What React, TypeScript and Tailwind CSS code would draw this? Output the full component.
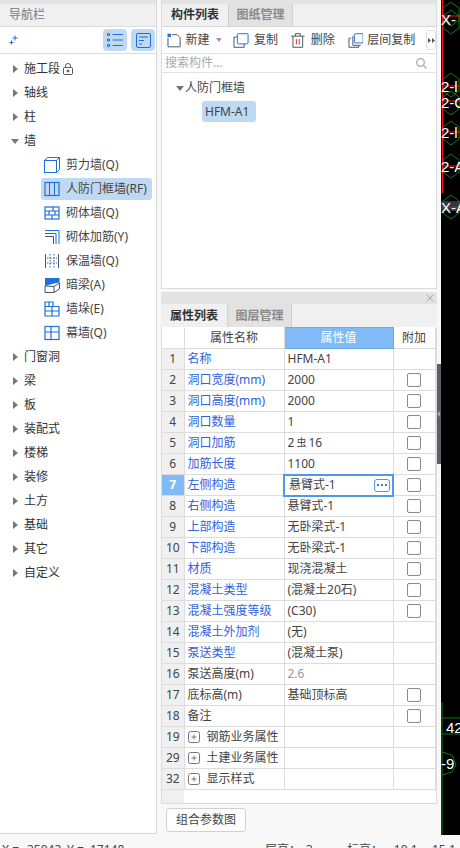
import type { ReactNode } from "react";

const NAV_TOP = ["施工段", "轴线", "柱"];
const NAV_BOTTOM = ["门窗洞", "梁", "板", "装配式", "楼梯", "装修", "土方", "基础", "其它", "自定义"];

const WALL_ITEMS: { label: string; icon: ReactNode; active?: boolean }[] = [
  {
    label: "剪力墙(Q)",
    icon: (
      <svg width="16" height="16" viewBox="0 0 16 16" fill="none" stroke="#1f6fd8">
        <rect x="0.5" y="3.5" width="12" height="12" />
        <path d="M0.5 3.5L3.5 0.5H15.5V12.5L12.5 15.5M12.5 3.5L15.5 .5" />
      </svg>
    ),
  },
  {
    label: "人防门框墙(RF)",
    active: true,
    icon: (
      <svg width="16" height="16" viewBox="0 0 16 16" fill="none" stroke="#1f6fd8">
        <rect x="1" y="1.5" width="14" height="13" strokeWidth="1.2" />
        <path d="M5.5 2V14M10.5 2V14" />
      </svg>
    ),
  },
  {
    label: "砌体墙(Q)",
    icon: (
      <svg width="16" height="16" viewBox="0 0 16 16" fill="none" stroke="#1f6fd8" strokeWidth="1.2">
        <rect x="1" y="2" width="14" height="12" />
        <path d="M1 6H15M1 10H15M9 2V6M5 6V10M11 6V10M8 10V14" />
      </svg>
    ),
  },
  {
    label: "砌体加筋(Y)",
    icon: (
      <svg width="16" height="16" viewBox="0 0 16 16" fill="none">
        <path d="M1 1.5H15V15M1 4.5H12V15" stroke="#1f6fd8" />
        <path d="M1 7.5H9.5V15" stroke="#4a5568" />
      </svg>
    ),
  },
  {
    label: "保温墙(Q)",
    icon: (
      <svg width="16" height="16" viewBox="0 0 16 16" fill="none">
        <path d="M1.5 1V15M14.5 1V15" stroke="#4a5568" />
        <path d="M6 1V15M10 1V15" stroke="#1f6fd8" strokeDasharray="1.5 1.5" />
        <path d="M3 5H13M3 10H13" stroke="#4a5568" strokeDasharray="1.5 1.5" />
      </svg>
    ),
  },
  {
    label: "暗梁(A)",
    icon: (
      <svg width="16" height="16" viewBox="0 0 16 16" fill="none">
        <path d="M1 1H15.5V5.5L10 6.5L1 9Z" fill="#1f6fd8" />
        <path d="M1 9V15.5H10V9.5L15.5 6V12L10 15.5M1 9L10 9.5" stroke="#4a5568" />
      </svg>
    ),
  },
  {
    label: "墙垛(E)",
    icon: (
      <svg width="16" height="16" viewBox="0 0 16 16" fill="none" stroke="#1f6fd8" strokeWidth="1.2">
        <path d="M1 1H9V5.5H15V15H1Z" />
        <path d="M1 5.5H9M5 1V5.5M1 10H15M8 5.5V15" />
      </svg>
    ),
  },
  {
    label: "幕墙(Q)",
    icon: (
      <svg width="16" height="16" viewBox="0 0 16 16" fill="none" stroke="#1f6fd8" strokeWidth="1.2">
        <rect x="1" y="1.5" width="14" height="13" />
        <path d="M1 7H15M7 1.5V14.5" />
      </svg>
    ),
  },
];

type Row = { no: number; name: string; value?: string; blue?: boolean; check?: boolean; muted?: boolean; active?: boolean };

const ROWS: Row[] = [
  { no: 1, name: "名称", value: "HFM-A1", blue: true },
  { no: 2, name: "洞口宽度(mm)", value: "2000", blue: true, check: true },
  { no: 3, name: "洞口高度(mm)", value: "2000", blue: true, check: true },
  { no: 4, name: "洞口数量", value: "1", blue: true, check: true },
  { no: 5, name: "洞口加筋", value: "2", blue: true, check: true },
  { no: 6, name: "加筋长度", value: "1100", blue: true, check: true },
  { no: 7, name: "左侧构造", value: "悬臂式-1", blue: true, check: true, active: true },
  { no: 8, name: "右侧构造", value: "悬臂式-1", blue: true, check: true },
  { no: 9, name: "上部构造", value: "无卧梁式-1", blue: true, check: true },
  { no: 10, name: "下部构造", value: "无卧梁式-1", blue: true, check: true },
  { no: 11, name: "材质", value: "现浇混凝土", blue: true, check: true },
  { no: 12, name: "混凝土类型", value: "(混凝土20石)", blue: true, check: true },
  { no: 13, name: "混凝土强度等级", value: "(C30)", blue: true, check: true },
  { no: 14, name: "混凝土外加剂", value: "(无)", blue: true },
  { no: 15, name: "泵送类型", value: "(混凝土泵)", blue: true },
  { no: 16, name: "泵送高度(m)", value: "2.6", muted: true },
  { no: 17, name: "底标高(m)", value: "基础顶标高", check: true },
  { no: 18, name: "备注", value: "", check: true },
];

const GROUPS = [
  { no: 19, name: "钢筋业务属性" },
  { no: 29, name: "土建业务属性" },
  { no: 32, name: "显示样式" },
];

function Caret({ open }: { open?: boolean }) {
  return open ? (
    <svg width="8" height="8" viewBox="0 0 8 8" fill="#777">
      <path d="M0 2H8L4 7Z" />
    </svg>
  ) : (
    <svg width="8" height="8" viewBox="0 0 8 8" fill="#777">
      <path d="M2 0L7 4L2 8Z" />
    </svg>
  );
}

function NavRow({ label, open, children }: { label: string; open?: boolean; children?: ReactNode }) {
  return (
    <div className="flex h-6 items-center pl-[11px] text-[#333]">
      <Caret open={open} />
      <span className="ml-[5px]">{label}</span>
      {children}
    </div>
  );
}

function Tab({ label, on }: { label: string; on?: boolean }) {
  return on ? (
    <div className="flex h-full w-[66px] items-center justify-center font-bold text-[#333]">{label}</div>
  ) : (
    <div className="flex h-full w-[65px] items-center justify-center border-x border-[#cfcfcf] bg-[#e2e2e2] font-bold text-[#8a8a8a]">
      {label}
    </div>
  );
}

function Canvas() {
  const hex = (cy: number) => `M443 ${cy - 6}L451 ${cy - 12}L459 ${cy - 6}V${cy + 6}L451 ${cy + 12}L443 ${cy + 6}Z`;
  return (
    <svg width="19" height="835" viewBox="441 0 19 835" className="block">
      <rect x="441" y="0" width="19" height="835" fill="#000" />
      <g fill="none" stroke="#0d7a12" strokeWidth="1">
        {[14, 22, 85, 103, 133, 166, 207].map((cy) => (
          <path key={cy} d={hex(cy)} />
        ))}
        <path d="M442 702V835M442 718H460M442 734H460" />
        <path d="M442 752L452 755L456 765L452 772L442 775" />
      </g>
      <path d="M442.5 0V193" stroke="#ff1414" strokeWidth="1.5" />
      <path d="M442 16H460M442 86H460M442 101H460M442 132H460M442 166H460M442 207H460" stroke="#ff1414" />
      <rect x="441" y="201" width="19" height="10" fill="#444b55" opacity="0.7" />
      <g fill="#fff" fontFamily="'Liberation Sans', sans-serif" fontSize="15">
        <text x="441" y="25">X-</text>
        <text x="441" y="92">2-l</text>
        <text x="441" y="108">2-C</text>
        <text x="441" y="138">2-l</text>
        <text x="441" y="172">2-A</text>
        <text x="441" y="213">X-A</text>
        <text x="446" y="733">42</text>
        <text x="441" y="769">-9</text>
      </g>
    </svg>
  );
}

export default function App() {
  return (
    <div className="flex h-[848px] w-[460px] flex-col overflow-hidden bg-[#f8f8f8] font-['Noto_Sans','Noto_Sans_CJK_SC',sans-serif] text-[12px] leading-none">
      <div className="flex h-[835px]">
        {/* navigator */}
        <div className="flex h-[834px] w-[157px] shrink-0 flex-col border-r border-b border-[#d6d6d6] bg-white">
          <div className="h-[4px] bg-[#e3e3e3]" />
          <div className="flex h-[22px] items-center bg-[#f0f0f0] pl-[9px] font-medium text-[#8d8d8d]">导航栏</div>
          <div className="flex h-[28px] items-center justify-between border-y border-[#dcdcdc] pr-[1px] pl-[9px]">
            <svg width="10" height="10" viewBox="0 0 10 10" stroke="#1f6fd8" fill="none">
              <path d="M6 0.5V5.5M3.5 3H8.5M2.5 5.5V9.5M0.5 7.5H4.5" />
            </svg>
            <div className="flex gap-[4px]">
              <div className="flex h-[22px] w-[24px] items-center justify-center rounded-[4px] bg-[#c0d9f3]">
                <svg width="16" height="14" viewBox="0 0 16 14" fill="none" stroke="#1f6fd8">
                  <path d="M5.5 1.5H16M5.5 7H16M5.5 12.5H16" />
                  <path d="M0.5 0.5H2.5V2.5H0.5ZM0.5 6H2.5V8H0.5ZM0.5 11.5H2.5V13.5H0.5Z" />
                </svg>
              </div>
              <div className="flex h-[22px] w-[24px] items-center justify-center rounded-[4px] bg-[#c0d9f3]">
                <svg width="15" height="15" viewBox="0 0 15 15" fill="none" stroke="#1f6fd8">
                  <rect x="0.5" y="0.5" width="14" height="14" rx="1.5" />
                  <path d="M3 4H12M3 7.5H8M3 11H6" />
                </svg>
              </div>
            </div>
          </div>
          <div className="pt-[3px]">
            {NAV_TOP.map((n, i) => (
              <NavRow key={n} label={n}>
                {i === 0 && (
                  <svg className="ml-[3px]" width="10" height="12" viewBox="0 0 10 12" fill="none" stroke="#555">
                    <rect x="0.5" y="4.5" width="9" height="7" rx="1" />
                    <path d="M2.5 4.5V3A2.5 2.5 0 0 1 7.5 3V4.5" />
                    <circle cx="5" cy="8" r="1" fill="#555" />
                  </svg>
                )}
              </NavRow>
            ))}
            <NavRow label="墙" open />
            <div className="flex flex-col">
              {WALL_ITEMS.map((w) => (
                <div key={w.label} className="ml-[41px] mr-[4px] flex h-6 items-center text-[#444]">
                  <div className={`flex h-[22px] w-full items-center rounded-[3px] pl-[3px] ${w.active ? "bg-[#c0d9f3]" : ""}`}>
                    <span className="flex w-[22px] shrink-0">{w.icon}</span>
                    <span className="whitespace-nowrap">{w.label}</span>
                  </div>
                </div>
              ))}
            </div>
            {NAV_BOTTOM.map((n) => (
              <NavRow key={n} label={n} />
            ))}
          </div>
        </div>

        {/* right panels */}
        <div className="ml-[4px] flex h-full w-[276px] shrink-0 flex-col">
          <div className="flex h-[289px] flex-col border-x border-b border-[#dcdcdc] bg-white">
            <div className="h-[4px] bg-[#e3e3e3]" />
            <div className="flex h-[23px] items-center border-b border-[#d6d6d6] bg-[#f0f0f0]">
              <Tab label="构件列表" on />
              <Tab label="图纸管理" />
            </div>
            <div className="flex h-[27px] items-center whitespace-nowrap border-b border-[#e2e2e2] pl-[5px] text-[#444]">
              <svg width="15" height="15" viewBox="0 0 15 15" fill="none" stroke="#4a5568">
                <path d="M5 1.5H10.5L13.5 4.5V14H1V5" />
                <path d="M0.5 0.5H4V4H0.5Z" fill="#1f6fd8" stroke="none" />
              </svg>
              <span className="ml-[4px]">新建</span>
              <svg className="ml-[6px]" width="6" height="4" viewBox="0 0 6 4" fill="#999">
                <path d="M0 0H6L3 4Z" />
              </svg>
              <svg className="ml-[12px]" width="16" height="15" viewBox="0 0 16 15" fill="none">
                <path d="M4 4H1V14.5H11.5V11" stroke="#4a5568" />
                <rect x="4.5" y="0.5" width="11" height="10.5" rx="1" stroke="#1f6fd8" />
              </svg>
              <span className="ml-[5px]">复制</span>
              <svg className="ml-[13px]" width="14" height="15" viewBox="0 0 14 15" fill="none" stroke="#4a5568">
                <path d="M0 3H14M4.5 3V0.5H9.5V3M2 3V14.5H12V3" />
                <path d="M5.5 6V11.5M8.5 6V11.5" stroke="#e02020" />
              </svg>
              <span className="ml-[6px]">删除</span>
              <svg className="ml-[13px]" width="16" height="15" viewBox="0 0 16 15" fill="none">
                <path d="M3 5H1V14.5H11V13M5 3V12.5H13" stroke="#4a5568" />
                <rect x="6.5" y="0.5" width="9" height="9.5" rx="1" stroke="#1f6fd8" />
              </svg>
              <span className="ml-[4px]">层间复制</span>
              <div className="ml-[11px] flex h-[20px] w-[10px] items-center justify-center rounded-[3px] border border-[#e2e2e2]">
                <svg width="7" height="5" viewBox="0 0 7 5" fill="#555">
                  <path d="M0 0L3 2.5L0 5ZM4 0L7 2.5L4 5Z" />
                </svg>
              </div>
            </div>
            <div className="flex h-[19px] items-center justify-between border-b border-[#e2e2e2] pr-[9px] pl-[3px] text-[#aaa]">
              <span>搜索构件...</span>
              <svg width="11" height="11" viewBox="0 0 11 11" fill="none" stroke="#aaa" strokeWidth="1.3">
                <circle cx="4.5" cy="4.5" r="3.8" />
                <path d="M7.5 7.5L10.5 10.5" />
              </svg>
            </div>
            <div className="flex h-[25px] items-center pt-[5px] pl-[14px] text-[#444]">
              <Caret open />
              <span className="ml-[1px]">人防门框墙</span>
            </div>
            <div className="ml-[40px] mt-[3px] flex h-[21px] w-[54px] items-center rounded-[3px] bg-[#c0d9f3] pl-[3px] text-[#444]">
              HFM-A1
            </div>
          </div>

          <div className="mt-[3px] flex flex-1 flex-col">
            <div className="flex h-[12px] items-center justify-end bg-[#e3e3e3] pr-[3px]">
              <svg width="8" height="8" viewBox="0 0 8 8" stroke="#aaa" fill="none">
                <path d="M0.5 0.5L7.5 7.5M7.5 0.5L0.5 7.5" />
              </svg>
            </div>
            <div className="flex h-[23px] items-center bg-[#f0f0f0]">
              <Tab label="属性列表" on />
              <Tab label="图层管理" />
            </div>
            <div className="flex h-[477px] flex-col border-x border-b border-[#dcdcdc] bg-white">
              <table className="w-[273px] table-fixed border-collapse text-[#444]">
                <colgroup>
                  <col className="w-[22px]" />
                  <col className="w-[100px]" />
                  <col className="w-[109px]" />
                  <col className="w-[42px]" />
                </colgroup>
                <thead>
                  <tr className="h-[21px]">
                    <th className="border-r border-b border-[#dcdcdc] font-normal" />
                    <th className="border-r border-b border-[#dcdcdc] font-normal">属性名称</th>
                    <th className="border border-[#6aa9ee] bg-[#80baf7] font-normal text-white">属性值</th>
                    <th className="border-r border-b border-[#dcdcdc] font-normal">附加</th>
                  </tr>
                </thead>
                <tbody>
                  {ROWS.map((r) => (
                    <tr key={r.no} className="h-[21px]">
                      <td
                        className={`border-r border-b border-[#dcdcdc] text-center ${
                          r.active ? "bg-[#80baf7] font-bold text-white" : "bg-[#f0f0f0]"
                        }`}
                      >
                        {r.no}
                      </td>
                      <td className={`whitespace-nowrap border-r border-b border-[#dcdcdc] pl-[3px] ${r.blue ? "text-[#2f62e0]" : ""}`}>
                        {r.name}
                      </td>
                      {r.active ? (
                        <td className="border-2 border-[#4d9be8] pl-[4px]">
                          <div className="flex items-center justify-between pr-[2px]">
                            <span>{r.value}</span>
                            <span className="flex h-[13px] w-[16px] items-center justify-center rounded-[3px] border border-[#4d9be8]">
                              <svg width="10" height="2" viewBox="0 0 10 2" fill="#2f7fdc">
                                <path d="M0 0H2V2H0ZM4 0H6V2H4ZM8 0H10V2H8Z" />
                              </svg>
                            </span>
                          </div>
                        </td>
                      ) : (
                        <td className={`border-r border-b border-[#dcdcdc] pl-[3px] ${r.muted ? "text-[#999]" : ""}`}>
                          {r.no === 5 ? (
                            <span className="flex items-center">
                              2<span className="mx-[2px] -translate-y-[1px] text-[10px]">虫</span>16
                            </span>
                          ) : (
                            r.value
                          )}
                        </td>
                      )}
                      <td className="border-r border-b border-[#dcdcdc]">
                        {r.check && <div className="mx-auto h-[14px] w-[14px] rounded-[2px] border border-[#8a8a8a] bg-white" />}
                      </td>
                    </tr>
                  ))}
                  {GROUPS.map((g) => (
                    <tr key={g.no} className="h-[21px]">
                      <td className="border-r border-b border-[#dcdcdc] bg-[#f0f0f0] text-center">{g.no}</td>
                      <td className="whitespace-nowrap border-r border-b border-[#dcdcdc] pl-[3px]">
                        <span className="flex items-center">
                          <svg width="12" height="12" viewBox="0 0 12 12" fill="none" stroke="#777">
                            <rect x="0.5" y="0.5" width="11" height="11" rx="2" />
                            <path d="M3.5 6H8.5M6 3.5V8.5" />
                          </svg>
                          <span className="ml-[7px]">{g.name}</span>
                        </span>
                      </td>
                      <td className="border-r border-b border-[#dcdcdc]" />
                      <td className="border-r border-b border-[#dcdcdc]" />
                    </tr>
                  ))}
                </tbody>
              </table>
              <div className="w-[22px] flex-1 bg-[#f0f0f0]" />
            </div>
            <div className="pt-[4px] pl-[5px]">
              <button className="h-[24px] w-[80px] rounded-[3px] border border-[#d0d0d0] bg-white text-[#444]">组合参数图</button>
            </div>
          </div>
        </div>

        {/* splitter */}
        <div className="flex w-[4px] shrink-0 flex-col pt-[364px]">
          <div className="flex h-[100px] items-center bg-[#5b5f66]">
            <svg width="4" height="6" viewBox="0 0 4 6" fill="#aaa">
              <path d="M3 0V6L0 3Z" />
            </svg>
          </div>
        </div>
        <Canvas />
      </div>

      {/* status bar */}
      <div className="h-[13px] overflow-hidden bg-[#f8f8f8] pt-[9px] text-[#444]">
        <div className="flex whitespace-nowrap">
          <span className="w-[27px] shrink-0 pl-[2px]">X =</span>
          <span className="w-[40px] shrink-0">35042</span>
          <span className="w-[23px] shrink-0">Y =</span>
          <span className="w-[175px] shrink-0">17148</span>
          <span className="w-[41px] shrink-0">层高：</span>
          <span className="w-[41px] shrink-0">3</span>
          <span className="w-[43px] shrink-0">标高：</span>
          <span className="w-[42px] shrink-0">-10.1</span>
          <span className="shrink-0">15.1</span>
        </div>
      </div>
    </div>
  );
}
